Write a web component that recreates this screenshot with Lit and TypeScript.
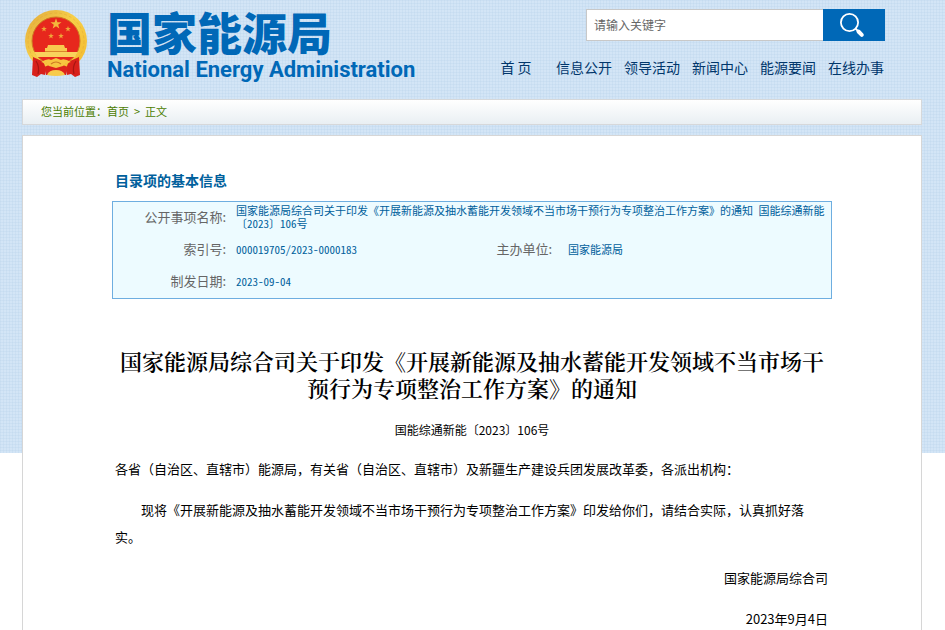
import { LitElement, html, css, svg } from "lit";
import { customElement } from "lit/decorators.js";

const NAV = ["首 页", "信息公开", "领导活动", "新闻中心", "能源要闻", "在线办事"];

const STAR = "M0,-5 L1.2,-1.6 4.8,-1.6 1.9,.6 2.9,4 0,1.9 -2.9,4 -1.9,.6 -4.8,-1.6 -1.2,-1.6Z";

const SMALL_STARS = [
  [20, 20],
  [44, 20],
  [27, 27],
  [37, 27],
];

@customElement("national-emblem")
export class NationalEmblem extends LitElement {
  static styles = css`
    :host {
      display: block;
      flex: none;
    }
    svg {
      display: block;
    }
  `;

  render() {
    return html`
      <svg width="64" height="68" viewBox="0 0 64 68" role="img" aria-label="国徽">
        <defs>
          <linearGradient id="gold" x1="0" y1="0" x2="1" y2="1">
            <stop offset="0" stop-color="#e0a83c" />
            <stop offset=".45" stop-color="#f7cf48" />
            <stop offset="1" stop-color="#f4b92c" />
          </linearGradient>
        </defs>
        <circle cx="32" cy="32" r="31" fill="url(#gold)" />
        <circle cx="32" cy="32" r="28" fill="none" stroke="#dfa032" stroke-width="1" stroke-dasharray="3 2" opacity=".4" />
        <circle cx="32" cy="32" r="24" fill="#e7271d" stroke="#cf7a24" stroke-width="1" />
        <path d=${STAR} fill="#f4b83c" transform="translate(32 15) scale(1.15)" />
        ${SMALL_STARS.map(
          ([x, y]) => svg`<path d=${STAR} fill="#f0a638" transform="translate(${x} ${y}) scale(.6)" />`
        )}
        <path d="M24,36 H40 L41,39 H43 V42 H21 V39 H23Z" fill="#f8c94e" />
        <path d="M10,43 H54 L51,48 H13Z" fill="#f9d25c" />
        <path d="M21,42.5 H43" stroke="#d9862b" stroke-width="1" />
        <path d="M9,48 L18,52 Q23,57 21,66 L17,65 13,68 8,66Z" fill="#d8201b" />
        <path d="M55,48 L46,52 Q41,57 43,66 L47,65 51,68 56,66Z" fill="#d8201b" />
        <path d="M12,52 Q16,58 14,65 M52,52 Q48,58 50,65" stroke="#a81512" stroke-width="1.2" fill="none" />
        <path d="M20,58 Q32,52 44,58 L42,66 H22Z" fill="#dc241c" />
        <path d="M17,53 Q24,49 27,51 L32,49 37,51 Q40,49 47,53 Q41,54 39,57 L32,59 25,57 Q23,54 17,53Z" fill="#f7c540" />
        <path d="M27,55 Q32,51 37,55" stroke="#cf7a24" stroke-width="1.2" fill="none" />
        <path d="M23,66 Q25,61 32,61 Q39,61 41,66 Q32,68 23,66Z" fill="#f8cb4a" />
      </svg>
    `;
  }
}

@customElement("app-root")
export class AppRoot extends LitElement {
  static styles = css`
    :host {
      display: block;
      min-height: 100vh;
      box-sizing: border-box;
      padding: 0 23px 0 22px;
      font-family: "Noto Sans CJK SC", sans-serif;
      text-spacing-trim: space-all;
      color: #000;
      background-color: #fff;
      background-image: repeating-linear-gradient(90deg, #b4cfe840 0 1px, transparent 1px 3px),
        repeating-linear-gradient(#b4cfe840 0 1px, transparent 1px 3px),
        linear-gradient(#d3e5f6, #d3e5f6);
      background-size: 100% 453px;
      background-repeat: no-repeat;
    }
    .page {
      max-width: 1000px;
      min-height: 100vh;
      margin: 0 auto;
      display: flex;
      flex-direction: column;
    }
    a {
      color: inherit;
      text-decoration: none;
    }
    .header {
      display: flex;
      justify-content: space-between;
      height: 90px;
      padding: 9px 32px 0 2px;
    }
    .brand {
      display: flex;
      gap: 19px;
      color: #0068b7;
    }
    .brand-name {
      margin: 0;
      font-size: 45px;
      line-height: 46px;
      font-weight: 900;
      white-space: nowrap;
    }
    .brand-sub {
      margin: 3px 0 0;
      font: bold 22px/24px Roboto, "Liberation Sans", sans-serif;
      white-space: nowrap;
    }
    .tools {
      display: flex;
      flex-direction: column;
      align-items: flex-end;
      gap: 16px;
    }
    .search {
      display: flex;
      height: 32px;
      margin-right: 5px;
    }
    .search-input {
      box-sizing: border-box;
      width: 237px;
      padding: 0 7px;
      border: 1px solid #c8c8c8;
      border-right: 0;
      border-radius: 0;
      outline: 0;
      background: #fff;
      font: 12px/30px "Noto Sans CJK SC", sans-serif;
    }
    .search-input::placeholder {
      color: #666;
      opacity: 1;
    }
    .search-button {
      display: grid;
      place-items: center;
      width: 62px;
      padding: 0 4px 0 0;
      border: 0;
      background: #0068b7;
      cursor: pointer;
    }
    .nav {
      display: grid;
      grid-template-columns: repeat(6, 68px);
      font-size: 14px;
      line-height: 20px;
      text-align: center;
      color: #00366b;
    }
    .crumbs {
      box-sizing: border-box;
      height: 26px;
      padding: 0 18px;
      border: 1px solid #d6d8da;
      background: linear-gradient(#fff, #e9eff3);
      font-size: 11px;
      line-height: 22px;
      color: #4c7d00;
    }
    .sep {
      margin: 0 5px;
    }
    .content {
      flex: 1;
      margin-top: 10px;
      padding: 34px 89px 0;
      border: 1px solid #d6d6d6;
      border-bottom: 0;
      background: #fff;
    }
    .info-title {
      margin: 0 0 10px 3px;
      font-size: 14px;
      line-height: 21px;
      font-weight: bold;
      color: #00609c;
    }
    .info {
      width: 100%;
      table-layout: fixed;
      border-collapse: separate;
      border-spacing: 0;
      border: 1px solid #6eaee0;
      background: #edfbff;
    }
    .info th,
    .info td {
      box-sizing: border-box;
      height: 32px;
      padding: 0 0 2px;
      vertical-align: middle;
    }
    .info th {
      padding-right: 1px;
      font-size: 13px;
      line-height: 20px;
      font-weight: normal;
      text-align: right;
      color: #666;
    }
    .info td {
      padding-left: 9px;
      font-size: 11px;
      line-height: 13px;
      font-feature-settings: "hwid";
      color: #00609c;
    }
    .info .wide-gap {
      padding-left: 15px;
    }
    .c-label {
      width: 114px;
    }
    .c-value {
      width: 269px;
    }
    .c-label-2 {
      width: 57px;
    }
    .title {
      margin: 48px 0 0;
      font-family: "Noto Serif CJK SC", "Noto Sans CJK SC", serif;
      font-size: 22px;
      line-height: 27px;
      font-weight: 600;
      text-align: center;
    }
    .doc-no {
      margin: 19px 0 0;
      font-size: 12px;
      line-height: 20px;
      text-align: center;
    }
    .body {
      padding: 0 4px 0 3px;
      margin-top: 15px;
      font-size: 13px;
      line-height: 27px;
    }
    .body p {
      margin: 0 0 14px;
    }
    .body .indent {
      text-indent: 2em;
    }
    .body .sign {
      text-align: right;
    }
  `;

  render() {
    return html`
      <div class="page">
        <header class="header">
          <div class="brand">
            <national-emblem></national-emblem>
            <div>
              <h1 class="brand-name">国家能源局</h1>
              <p class="brand-sub">National Energy Administration</p>
            </div>
          </div>
          <div class="tools">
            <form class="search" @submit=${(e: Event) => e.preventDefault()}>
              <input class="search-input" type="text" aria-label="请输入关键字" placeholder="请输入关键字" />
              <button class="search-button" type="submit" aria-label="搜索">
                <svg width="26" height="26" viewBox="0 0 26 26" fill="none" stroke="#fff" stroke-linecap="round">
                  <circle cx="10.5" cy="10.5" r="8.6" stroke-width="1.8" />
                  <path d="M16.8,16.8 L19,19" stroke-width="1.8" />
                  <path d="M19.5,19.5 L22.8,22.8" stroke-width="4" />
                </svg>
              </button>
            </form>
            <nav class="nav">${NAV.map((item) => html`<a href="#">${item}</a>`)}</nav>
          </div>
        </header>

        <nav class="crumbs" aria-label="当前位置">
          您当前位置：<a href="#">首页</a><span class="sep">&gt;</span><span>正文</span>
        </nav>

        <main class="content">
          <h2 class="info-title">目录项的基本信息</h2>
          <table class="info">
            <colgroup>
              <col class="c-label" />
              <col class="c-value" />
              <col class="c-label-2" />
              <col />
            </colgroup>
            <tbody>
              <tr>
                <th scope="row">公开事项名称:</th>
                <td colspan="3">
                  国家能源局综合司关于印发《开展新能源及抽水蓄能开发领域不当市场干预行为专项整治工作方案》的通知 国能综通新能〔2023〕106号
                </td>
              </tr>
              <tr>
                <th scope="row">索引号:</th>
                <td>000019705/2023-0000183</td>
                <th scope="row">主办单位:</th>
                <td class="wide-gap">国家能源局</td>
              </tr>
              <tr>
                <th scope="row">制发日期:</th>
                <td colspan="3">2023-09-04</td>
              </tr>
            </tbody>
          </table>

          <article>
            <h2 class="title">国家能源局综合司关于印发《开展新能源及抽水蓄能开发领域不当市场干预行为专项整治工作方案》的通知</h2>
            <p class="doc-no">国能综通新能〔2023〕106号</p>
            <div class="body">
              <p>各省（自治区、直辖市）能源局，有关省（自治区、直辖市）及新疆生产建设兵团发展改革委，各派出机构：</p>
              <p class="indent">现将《开展新能源及抽水蓄能开发领域不当市场干预行为专项整治工作方案》印发给你们，请结合实际，认真抓好落实。</p>
              <p class="sign">国家能源局综合司</p>
              <p class="sign">2023年9月4日</p>
            </div>
          </article>
        </main>
      </div>
    `;
  }
}
